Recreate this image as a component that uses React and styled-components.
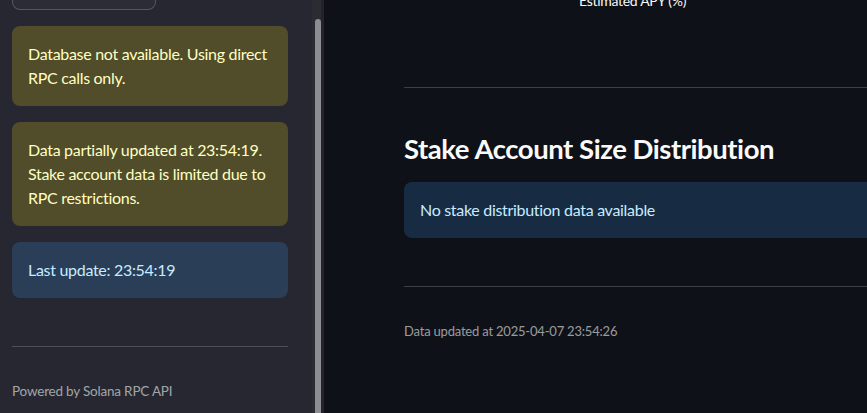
import React from 'react';
import styled, { createGlobalStyle } from 'styled-components';

const GlobalStyle = createGlobalStyle`
  html, body {
    margin: 0;
    padding: 0;
    background: #0e1117;
    overflow: hidden;
  }
  body {
    font-family: Lato, "Noto Sans", sans-serif;
    color: #fafafa;
  }
  * {
    box-sizing: border-box;
  }
`;

const Page = styled.div`
  display: flex;
  width: 867px;
  height: 413px;
  overflow: hidden;
`;

const Sidebar = styled.aside`
  display: flex;
  flex-shrink: 0;
  width: 324px;
  height: 100%;
  background: #262730;
  overflow: hidden;
`;

const SidebarContent = styled.div`
  display: flex;
  flex-direction: column;
  gap: 16px;
  width: 312px;
  padding: 0 24px 0 12px;
  margin-top: -30px; // scrolled down a little
`;

const ScrollTrack = styled.div`
  display: flex;
  justify-content: center;
  width: 12px;
  padding-top: 19px;
  padding-left: 3px;
  background: #2a2b33;
  border-right: 3px solid #23242b;
`;

const ScrollThumb = styled.div`
  width: 6px;
  height: 420px;
  border-radius: 3px;
  background: #8c8c91;
`;

const SidebarButton = styled.button`
  width: 144px;
  height: 40px;
  border: 1px solid rgba(250, 250, 250, 0.2);
  border-radius: 8px;
  background: #2b2c36;
  color: #fafafa;
  font: inherit;
  font-size: 16px;
`;

const Alert = styled.div`
  padding: 16px;
  border-radius: 8px;
  font-size: 16px;
  line-height: 24px;
  letter-spacing: -0.3px;
  background: ${({ kind }) =>
    kind === 'warning' ? 'rgba(255, 227, 18, 0.2)' : 'rgba(61, 157, 243, 0.2)'};
  color: ${({ kind }) => (kind === 'warning' ? '#ffffc2' : '#c7ebff')};
`;

const Rule = styled.hr`
  margin: ${({ mt }) => mt || 0}px 0 0;
  border: none;
  height: 1px;
  background: rgba(250, 250, 250, 0.2);
`;

const FooterNote = styled.div`
  margin-top: ${({ mt }) => mt || 0}px;
  font-size: ${({ size }) => size || 14}px;
  line-height: 20px;
  letter-spacing: -0.2px;
  color: rgba(250, 250, 250, 0.6);
`;

const Main = styled.main`
  flex: 1;
  min-width: 0;
  padding-left: 80px;
  overflow: hidden;
`;

const MainContent = styled.div`
  display: flex;
  flex-direction: column;
  width: 736px;
`;

const AxisTitle = styled.div`
  margin-top: -7px;
  padding-left: 175px;
  height: 16px;
  font-size: 14px;
  line-height: 16px;
  letter-spacing: -0.3px;
  color: #fafafa;
`;

const Heading = styled.h2`
  margin: 44px 0 0;
  font-size: 27.5px;
  font-weight: 700;
  line-height: 34px;
  letter-spacing: -0.45px;
  color: #fafafa;
`;

const MainAlert = styled(Alert)`
  margin-top: 16px;
`;

export default function App() {
  return (
    <>
      <GlobalStyle />
      <Page>
        <Sidebar>
          <SidebarContent>
            <SidebarButton>Refresh Data</SidebarButton>
            <Alert kind='warning'>
              Database not available. Using direct RPC calls only.
            </Alert>
            <Alert kind='warning'>
              Data partially updated at 23:54:19. Stake account data is limited
              due to RPC restrictions.
            </Alert>
            <Alert kind='info'>Last update: 23:54:19</Alert>
            <Rule mt={32} />
            <FooterNote mt={18} size={13.5}>
              Powered by Solana RPC API
            </FooterNote>
          </SidebarContent>
          <ScrollTrack>
            <ScrollThumb />
          </ScrollTrack>
        </Sidebar>
        <Main>
          <MainContent>
            <AxisTitle>Estimated APY (%)</AxisTitle>
            <Rule mt={78} />
            <Heading>Stake Account Size Distribution</Heading>
            <MainAlert kind='info'>No stake distribution data available</MainAlert>
            <Rule mt={48} />
            <FooterNote mt={34} size={13}>
              Data updated at 2025-04-07 23:54:26
            </FooterNote>
          </MainContent>
        </Main>
      </Page>
    </>
  );
}
